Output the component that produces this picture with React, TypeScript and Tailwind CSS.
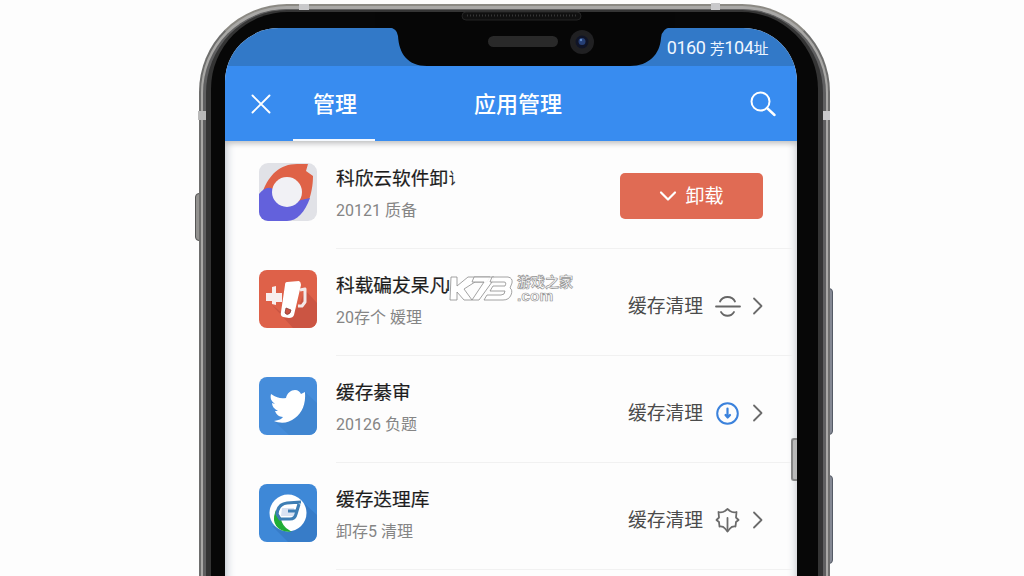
import React from "react";

type Row = {
  icon: React.ReactNode;
  title: string;
  tail?: string;
  sub: string;
  action: React.ReactNode;
};

const stroke = { fill: "none", strokeLinecap: "round", strokeLinejoin: "round" } as const;

function RingIcon() {
  return (
    <svg viewBox="0 0 58 58" className="size-[58px] rounded-[9px] bg-[#e1e2e7]">
      <path d="M4 28C10 12 21 1 38 1L49 1 47 8 54 13C54 23 52 31 50 37L38 40Z" fill="#df6247" />
      <path d="M0 31C4 26 9 23 14 26C18 42 28 44 42 37L51 35C46 49 38 58 28 58H0Z" fill="#6361dc" />
      <circle cx="28" cy="29" r="15" fill="#f1f1f5" />
    </svg>
  );
}

function CleanerIcon() {
  return (
    <svg viewBox="0 0 58 58" className="size-[58px] rounded-[8px] bg-[#de6149]">
      <path d="M12 34L34 58H50Q58 58 58 50V33L46 20 40 36 28 47Z" fill="#cb5543" />
      <path d="M7 23H13V17L17 16V23H23V32H17V35L13 34V31H7Z" fill="#f8eeee" />
      <path d="M28 12L40 11Q42 12 42 15L35 45Q34 48 30 48L24 47Q21 46 22 42L26 15Q26 12 28 12Z" fill="#fff" />
      <path d="M41 20L46 19V32L43 36H39" fill="none" stroke="#f3e8e8" strokeWidth="3" strokeLinejoin="round" />
      <path d="M27 38L32 40 31 43Q28 46 26 43Z" fill="#c95343" stroke="#823e37" strokeWidth=".8" />
    </svg>
  );
}

function BirdIcon() {
  return (
    <svg viewBox="0 0 58 58" className="size-[58px] rounded-[8px] bg-[#468ddb]">
      <path d="M16 45L30 58H50Q58 58 58 50V26L46 15 38 38Z" fill="#4086d1" />
      <path d="M12 17C18 21 22 22 27 21C28 16 32 13 36 13C39 13 41 15 42 17L46 15C47 27 43 36 36 41C30 46 22 47 15 44C20 43 23 42 24 40C20 40 17 37 16 34H19C15 32 13 29 13 26L16 27C12 24 11 21 12 17Z" fill="#fff" />
    </svg>
  );
}

function GlobeIcon() {
  return (
    <svg viewBox="0 0 58 58" className="size-[58px] rounded-[8px] bg-[#3e88d7]">
      <path d="M13 42L29 58H50Q58 58 58 50V31L46 20 40 42Z" fill="#377cc8" />
      <circle cx="29" cy="29" r="18.5" fill="#fff" />
      <path d="M17 28C13 39 19 47 30 47C25 44 22 40 21 34Z" fill="#21ad35" stroke="#21ad35" strokeWidth="1.5" />
      <path d="M23 24H35V32H22Z" fill="#d9e2f2" />
      <path d="M42 18L28 19Q19 20 18 30L21 35H31Q36 35 37 30L40 20M29 27H37" fill="none" stroke="#3e7eb4" strokeWidth="3.2" />
    </svg>
  );
}

function Chevron() {
  return (
    <svg viewBox="0 0 12 20" className="ml-[11px] h-5 w-3">
      <path d="M2 2.5L9.5 10 2 17.5" {...stroke} stroke="#6b6b6b" strokeWidth="1.8" />
    </svg>
  );
}

function CacheAction({ children }: { children: React.ReactNode }) {
  return (
    <div className="mr-[33px] flex h-7 items-center text-[18.75px] leading-7 text-[#4b4b4b]">
      <span className="mr-3 pt-[2px]">缓存清理</span>
      {children}
      <Chevron />
    </div>
  );
}

function SplitGlyph() {
  return (
    <svg viewBox="0 0 26 26" className="size-[26px]">
      <path d="M1 13.5H25M5 8.5C8 2.500 17 2.500 20 8.500M6 19C9 24 16 24 19 19" {...stroke} stroke="#666" strokeWidth="1.8" />
    </svg>
  );
}

function DownGlyph() {
  return (
    <svg viewBox="0 0 26 26" className="size-[26px]">
      <circle cx="12.5" cy="13.5" r="10.3" fill="none" stroke="#3b82dc" strokeWidth="2" />
      <path d="M12.500 8.500V17M10.500 15L12.700 17.500 15 15" {...stroke} stroke="#3b82dc" strokeWidth="2.200" />
    </svg>
  );
}

function GearGlyph() {
  return (
    <svg viewBox="0 0 26 26" className="size-[26px]">
      <path d="M12.500 2L15 4Q18 6 21.500 5L21 10.500 23.500 13 21 15 20.500 19.500Q17 19 15 21.500L12.500 24.500 10 21.500Q8 19 4.500 19.500L4 15 1.500 13 4 10.500 3.500 5Q7 6 10 4Z" {...stroke} stroke="#6b6b6b" strokeWidth="1.8" />
      <path d="M12.500 11V24" {...stroke} stroke="#6b6b6b" strokeWidth="1.8" />
    </svg>
  );
}

const rows: Row[] = [
  {
    icon: <RingIcon />,
    title: "科欣云软件卸",
    tail: "讠",
    sub: "20121 质备",
    action: (
      <button className="mr-[34px] -mt-[3px] flex h-[46px] w-[143px] items-center justify-center rounded-[5px] bg-[#e06b54] text-[19px] text-white">
        <svg viewBox="0 0 18 12" className="mr-2 h-3 w-[18px]">
          <path d="M2 2.500L9 9.500 16 2.500" {...stroke} stroke="#fff" strokeWidth="2.200" />
        </svg>
        <span className="pt-[2px]">卸载</span>
      </button>
    ),
  },
  { icon: <CleanerIcon />, title: "科载碥犮杲凡", tail: "l", sub: "20存个 媛理", action: <CacheAction><SplitGlyph /></CacheAction> },
  { icon: <BirdIcon />, title: "缓存綦审", sub: "20126 负题", action: <CacheAction><DownGlyph /></CacheAction> },
  { icon: <GlobeIcon />, title: "缓存迭理库", sub: "卸存5 清理", action: <CacheAction><GearGlyph /></CacheAction> },
];

function ListRow({ row, first }: { row: Row; first: boolean }) {
  return (
    <div className="flex h-[107px] shrink-0 items-start pl-[34px] pt-[22px]">
      {row.icon}
      <div className="ml-[19px] grow">
        <div className="flex h-[32px] items-center whitespace-nowrap text-[18.700px] leading-[32px] text-[#1c1c1c] [-webkit-text-stroke:0.200px_#1c1c1c]">
          {row.title}
          {row.tail === "讠" && <span className="ml-px inline-block origin-left scale-x-75 text-[16px]">讠</span>}
          {row.tail === "l" && <span className="-ml-[2px] text-[15px]">l</span>}
        </div>
        <div className="whitespace-nowrap text-[16px] leading-[32px] text-[#858585]">{row.sub}</div>
      </div>
      <div className={first ? "pt-[13px]" : "pt-[22px]"}>{row.action}</div>
    </div>
  );
}

function Notch() {
  return (
    <svg viewBox="0 0 300 66" className="absolute left-[375px] top-0 h-[66px] w-[300px]">
      <path d="M0 12V27.500H14Q22 28 23 36C24 54 33 66 52 66H255C274 66 285 54 286 38Q287 28 296 27.500H300V12Z" fill="#060606" />
      <rect x="87" y="12" width="119" height="8" rx="4" fill="#101010" stroke="#2b2b2b" strokeWidth=".8" />
      <path d="M92 15.500H201" stroke="#353535" strokeWidth="2" strokeDasharray="1 2" />
      <rect x="113" y="36" width="70" height="11" rx="5.500" fill="#292929" />
      <circle cx="207" cy="42" r="12" fill="#202022" />
      <circle cx="207" cy="42" r="6.500" fill="#101426" />
      <circle cx="207" cy="41.500" r="3.500" fill="#263f75" />
      <circle cx="206" cy="40" r="1.200" fill="#6089c4" />
    </svg>
  );
}

function Watermark() {
  return (
    <div className="absolute left-[447px] top-[272px] flex h-[34px] w-[130px]">
      <svg viewBox="0 0 70 34" className="h-[34px] w-[70px] shrink-0">
        <g fill="#fff" fillOpacity=".9" stroke="#8b8b8b" strokeWidth=".8" strokeLinejoin="round">
          <path d="M4 5H10V14L21 5H43L40 10H28L17 17 25 28H17L10 20V28H3Z" />
          <path d="M27 5H47L45 10 32 28H25L37 10H25Z" />
          <path d="M45 5H61Q66 6 65 11L63 16Q66 18 64 23Q62 28 56 28H37L40 23H54Q58 23 58 19H43L46 14H58Q60 10 57 10H43Z" />
        </g>
      </svg>
      <div className="whitespace-nowrap pt-[3px] font-bold text-white [-webkit-text-stroke:0.700px_#959595]">
        <div className="text-[14px] leading-[14px]">游戏之家</div>
        <div className="font-['Liberation_Sans',sans-serif] text-[15.500px] leading-[13px]">.com</div>
      </div>
    </div>
  );
}

export default function App() {
  return (
    <div className="relative flex h-[576px] w-[1024px] justify-center overflow-hidden bg-[#fdfdfd] font-[Roboto,'Noto_Sans_CJK_SC',sans-serif]">
      <div className="absolute left-[195px] top-[193px] h-[48px] w-[7px] rounded-l-sm border border-[#555] bg-[#92918f]" />
      <div className="absolute left-[825px] top-[288px] h-[147px] w-[8px] rounded-r-sm border border-[#555b66] bg-[#858995]" />
      <div className="absolute left-[825px] top-[475px] h-[89px] w-[8px] rounded-r-sm border border-[#555b66] bg-[#858995]" />

      <div className="relative mt-1 ml-[5px] h-[660px] w-[631px] shrink-0 rounded-[88px] border-2 border-[#6e6e6d] border-t-[#8b8983] bg-[#a9a8a6] px-[2px] pt-[3px]">
        <div className="h-full rounded-[84px] border-x-[3px] border-t border-[#5f5f60] bg-[#343434] px-[5px] pt-[2px]">
          <div className="h-full rounded-[77px] bg-[#070707] pl-[14px] pr-[21px] pt-[16px]">
            <div className="flex h-[560px] flex-col overflow-hidden rounded-t-[54px] bg-[#fdfdfd]">
              <div className="flex h-[38px] shrink-0 items-center justify-end bg-[#3279c8] pr-[29px] text-[18px] text-[#eef6ff]">
                <span className="whitespace-nowrap tracking-[-0.400px]">0160 <span className="text-[15px]">芳</span>104<span className="text-[15px]">址</span></span>
              </div>
              <div className="flex h-[75px] shrink-0 items-stretch bg-[#388cf0] text-[22px] font-medium text-white">
                <svg viewBox="0 0 20 20" className="ml-[26px] mt-[28px] size-5">
                  <path d="M1.500 1.500L18.500 18.500M18.500 1.500L1.500 18.500" {...stroke} stroke="#fff" strokeWidth="1.900" />
                </svg>
                <div className="ml-[22px] flex w-[82px] items-center justify-center border-b-[2px] border-[#f5f9ff] pl-[2px] pt-[4px]">管理</div>
                <div className="ml-[99px] flex items-center pt-[2px]">应用管理</div>
                <svg viewBox="0 0 26 26" className="ml-auto mr-[21px] mt-[25px] size-[26px]">
                  <circle cx="10.500" cy="10.500" r="9" fill="none" stroke="#fff" strokeWidth="2" />
                  <path d="M17 17L24.500 24" {...stroke} stroke="#fff" strokeWidth="2.400" />
                </svg>
              </div>
              <div className="flex grow flex-col bg-[#fdfdfd] shadow-[inset_0_5px_6px_-3px_#bdbdbd,inset_6px_0_9px_-4px_#c3cbd6,inset_-6px_0_9px_-4px_#d3d6db]">
                {rows.map((row, i) => (
                  <React.Fragment key={row.title}>
                    <ListRow row={row} first={i === 0} />
                    <div className="-mb-px ml-[111px] mr-[4px] h-px shrink-0 bg-[#f1f1f1]" />
                  </React.Fragment>
                ))}
              </div>
            </div>
          </div>
        </div>
      </div>

      <Notch />
      <div className="absolute left-[791px] top-[438px] h-[43px] w-[6px] rounded-l-[3px] border-2 border-r-0 border-[#858585] bg-[#b9b9b9]" />
      <Watermark />
      <div className="absolute left-[299px] top-1 h-[6px] w-[10px] bg-[#c9c9cb]" />
      <div className="absolute left-[711px] top-[3px] h-[7px] w-[9px] bg-[#c9c9cb]" />
      <div className="absolute left-[198px] top-[111px] h-[9px] w-[8px] bg-[#b9b9b9]" />
      <div className="absolute left-[823px] top-[111px] h-[9px] w-[7px] bg-[#c9c9cb]" />
    </div>
  );
}
